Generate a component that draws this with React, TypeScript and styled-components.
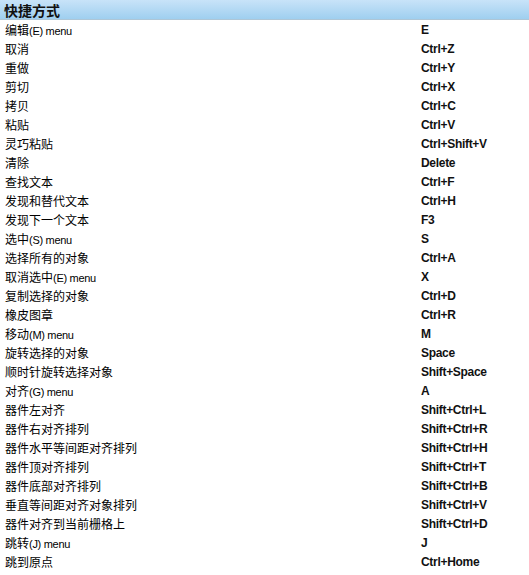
import React from "react";
import styled, { createGlobalStyle } from "styled-components";

const Global = createGlobalStyle`
  html, body { margin: 0; padding: 0; background: #fff; }
  body { font-family: "Liberation Sans", "Noto Sans CJK SC", sans-serif; }
`;

const Page = styled.div`
  width: 529px;
  display: flex;
  flex-direction: column;
`;

const Header = styled.div`
  height: 20px;
  box-sizing: border-box;
  padding-left: 4px;
  display: flex;
  align-items: center;
  background: linear-gradient(#c8e3f9, #9fcfef);
  border-bottom: 1px solid #aec6d6;
  font-family: "Noto Sans CJK SC", sans-serif;
  font-weight: 700;
  font-size: 14px;
  color: #111;
`;

const List = styled.div`
  display: flex;
  flex-direction: column;
`;

const Row = styled.div`
  height: 19px;
  display: grid;
  grid-template-columns: 421px 1fr;
  align-items: center;
`;

const Name = styled.div`
  padding-left: 5px;
  font-family: "Noto Sans CJK SC", sans-serif;
  font-size: 12px;
  color: #000;
  white-space: nowrap;
`;

const Latin = styled.span`
  font-family: "Liberation Sans", sans-serif;
  font-size: 11px;
  letter-spacing: -0.3px;
`;

const Key = styled.div`
  font-family: "Liberation Sans", sans-serif;
  font-weight: 700;
  font-size: 12px;
  letter-spacing: -0.3px;
  color: #111;
`;

type Item = [string, string, string?];

const items: Item[] = [
  ["编辑", "E", "(E) menu"],
  ["取消", "Ctrl+Z"],
  ["重做", "Ctrl+Y"],
  ["剪切", "Ctrl+X"],
  ["拷贝", "Ctrl+C"],
  ["粘贴", "Ctrl+V"],
  ["灵巧粘贴", "Ctrl+Shift+V"],
  ["清除", "Delete"],
  ["查找文本", "Ctrl+F"],
  ["发现和替代文本", "Ctrl+H"],
  ["发现下一个文本", "F3"],
  ["选中", "S", "(S) menu"],
  ["选择所有的对象", "Ctrl+A"],
  ["取消选中", "X", "(E) menu"],
  ["复制选择的对象", "Ctrl+D"],
  ["橡皮图章", "Ctrl+R"],
  ["移动", "M", "(M) menu"],
  ["旋转选择的对象", "Space"],
  ["顺时针旋转选择对象", "Shift+Space"],
  ["对齐", "A", "(G) menu"],
  ["器件左对齐", "Shift+Ctrl+L"],
  ["器件右对齐排列", "Shift+Ctrl+R"],
  ["器件水平等间距对齐排列", "Shift+Ctrl+H"],
  ["器件顶对齐排列", "Shift+Ctrl+T"],
  ["器件底部对齐排列", "Shift+Ctrl+B"],
  ["垂直等间距对齐对象排列", "Shift+Ctrl+V"],
  ["器件对齐到当前栅格上", "Shift+Ctrl+D"],
  ["跳转", "J", "(J) menu"],
  ["跳到原点", "Ctrl+Home"],
];

export default function App() {
  return (
    <>
      <Global />
      <Page>
        <Header>快捷方式</Header>
        <List>
          {items.map(([name, key, extra], i) => (
            <Row key={i}>
              <Name>
                {name}
                {extra && <Latin>{extra}</Latin>}
              </Name>
              <Key>{key}</Key>
            </Row>
          ))}
        </List>
      </Page>
    </>
  );
}
